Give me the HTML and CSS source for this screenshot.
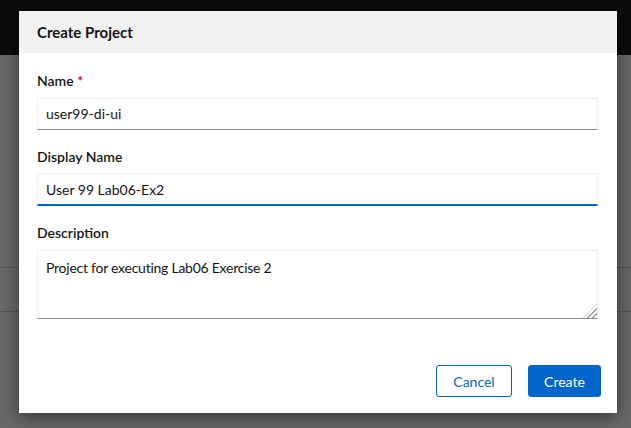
FILE: index.html
```html
<!DOCTYPE html>
<html lang="en">
<head>
<meta charset="utf-8">
<title>Create Project</title>
<link rel="stylesheet" href="styles.css">
</head>
<body>
<div class="page">
  <div class="masthead"></div>
  <div class="content">
    <div class="row-line first"></div>
    <div class="row-line second"></div>
  </div>
  <div class="modal">
    <div class="modal-header">
      <h1 class="modal-title">Create Project</h1>
    </div>
    <form class="modal-body">
      <div class="field">
        <label class="label">Name <span class="req">*</span></label>
        <div class="input">user99-di-ui</div>
      </div>
      <div class="field">
        <label class="label">Display Name</label>
        <div class="input focused">User 99 Lab06-Ex2</div>
      </div>
      <div class="field">
        <label class="label">Description</label>
        <div class="textarea">Project for executing Lab06 Exercise 2<span class="grip"></span></div>
      </div>
    </form>
    <div class="modal-footer">
      <button class="btn secondary" type="button">Cancel</button>
      <button class="btn primary" type="button">Create</button>
    </div>
  </div>
</div>
</body>
</html>
```

FILE: styles.css
```css
* { box-sizing: border-box; }
html, body { margin: 0; padding: 0; }
body {
  width: 631px;
  height: 428px;
  overflow: hidden;
  font-family: "Lato", "Open Sans", sans-serif;
  color: #151515;
  background: #676767;
}
.page {
  position: relative;
  width: 631px;
  height: 428px;
  display: flex;
  flex-direction: column;
}
.masthead {
  height: 55px;
  background: #0b0b0b;
  flex: none;
}
.content {
  flex: 1;
  background: #686868;
  display: flex;
  flex-direction: column;
  padding-top: 212px;
}
.row-line {
  height: 1px;
  background: #555;
}
.row-line.second { margin-top: 43px; }

.modal {
  position: absolute;
  left: 19px;
  top: 11px;
  width: 598px;
  height: 402px;
  background: #fff;
  box-shadow: 0 4px 16px rgba(0, 0, 0, 0.5);
  display: flex;
  flex-direction: column;
}
.modal-header {
  height: 42px;
  background: #f2f2f2;
  display: flex;
  align-items: center;
  padding-left: 18px;
}
.modal-title {
  margin: 0;
  font-size: 15px;
  font-weight: 700;
  color: #151515;
}
.modal-body {
  margin: 0;
  padding: 18px 19px 0 18px;
  display: flex;
  flex-direction: column;
  gap: 17px;
}
.field {
  display: flex;
  flex-direction: column;
  gap: 7px;
}
.label {
  height: 20px;
  line-height: 20px;
  font-size: 14px;
  font-weight: 600;
  color: #151515;
}
.req { color: #c9190b; font-weight: 700; }
.input {
  height: 32px;
  border: 1px solid #ededed;
  border-bottom-color: #8a8d90;
  padding: 0 8px;
  font-size: 14px;
  line-height: 30px;
  color: #151515;
}
.input.focused {
  border-bottom: 2px solid #0066cc;
  line-height: 30px;
}
.textarea {
  position: relative;
  height: 69px;
  border: 1px solid #ededed;
  border-bottom-color: #8a8d90;
  padding: 8px 8px;
  font-size: 14px;
  letter-spacing: -0.25px;
  line-height: 18px;
}
.grip {
  position: absolute;
  right: 0;
  bottom: 0;
  width: 14px;
  height: 14px;
  background: repeating-linear-gradient(135deg, transparent 0 2px, #a0a0a0 2px 3.5px);
  clip-path: polygon(100% 0, 100% 100%, 0 100%);
}
.modal-footer {
  margin-top: auto;
  padding: 0 16px 16px 0;
  display: flex;
  justify-content: flex-end;
  gap: 16px;
}
.btn {
  height: 32px;
  border-radius: 3px;
  font-family: inherit;
  font-size: 14px;
  padding: 0 15px;
  cursor: pointer;
}
.btn.secondary {
  width: 76px;
  background: #fff;
  color: #0066cc;
  border: 1px solid #0066cc;
}
.btn.primary {
  width: 73px;
  background: #0066cc;
  color: #fff;
  border: 1px solid #0066cc;
}
```
